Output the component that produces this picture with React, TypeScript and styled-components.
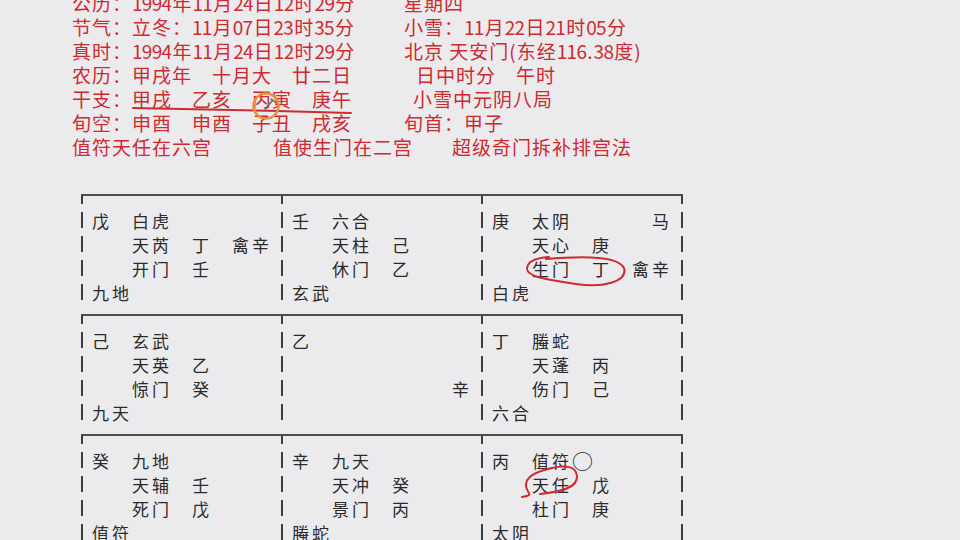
import React from "react";
import styled, { createGlobalStyle } from "styled-components";

const Global = createGlobalStyle`
  html, body { margin: 0; padding: 0; background: #ebebed; }
  body { width: 960px; height: 540px; overflow: hidden; }
`;

const RED = "#cf2a2f";

const Page = styled.div`
  position: relative;
  width: 960px;
  height: 540px;
  overflow: hidden;
  background: #ebebed;
  padding-left: 72px;
  box-sizing: border-box;
`;

const InfoBlock = styled.div`
  margin-top: -9px;
  display: flex;
  flex-direction: column;
  color: ${RED};
  font-family: "Noto Sans CJK SC", "Noto Sans", sans-serif;
  font-size: 19px;
  letter-spacing: 1px;
  white-space: pre;
`;

const InfoLine = styled.div`
  display: flex;
  height: 24px;
  line-height: 24px;
`;

const Seg = styled.span<{ $w?: number; $pad?: number }>`
  display: block;
  flex: none;
  width: ${(p) => (p.$w ? `${p.$w}px` : "auto")};
  padding-left: ${(p) => p.$pad ?? 0}px;
  box-sizing: border-box;
`;

const Num = styled.span`
  letter-spacing: -0.7px;
  margin-right: 1px;
`;

const Board = styled.div`
  margin-top: 35px;
  margin-left: 9px;
  display: grid;
  grid-template-columns: 200px 200px 202px;
  grid-auto-rows: 120px;
`;

const Cell = styled.div<{ $last?: boolean }>`
  box-sizing: border-box;
  border-top: 2px solid #4d4d4d;
  padding: 13px 0 9px 11px;
  background-image: repeating-linear-gradient(
      to bottom,
      #3a3a3a 0 16px,
      transparent 16px 24px
    )
    ${(p) =>
      p.$last
        ? `, repeating-linear-gradient(to bottom, #3a3a3a 0 16px, transparent 16px 24px)`
        : ""};
  background-size: 2px 100% ${(p) => (p.$last ? ", 2px 100%" : "")};
  background-position: 0 -8px ${(p) => (p.$last ? ", 200px -8px" : "")};
  background-repeat: no-repeat;
  color: #2a2a2a;
  font-family: "Noto Sans CJK SC", "Noto Sans", sans-serif;
  font-size: 17px;
  letter-spacing: 3px;
`;

const CellLine = styled.div`
  height: 24px;
  line-height: 24px;
  white-space: pre;
`;

const Ring = styled.span`
  font-size: 21px;
  line-height: 0;
  letter-spacing: 0;
  vertical-align: -1px;
`;

const Marks = styled.svg`
  position: absolute;
  left: 0;
  top: 0;
  pointer-events: none;
`;

const renderNum = (s: string) =>
  s.split(/(\d+)/).map((part, i) =>
    /^\d+$/.test(part) ? <Num key={i}>{part}</Num> : <React.Fragment key={i}>{part}</React.Fragment>
  );

const renderCell = (s: string) =>
  s.split(/(○)/).map((part, i) =>
    part === "○" ? <Ring key={i}>○</Ring> : <React.Fragment key={i}>{part}</React.Fragment>
  );

const cells: string[][] = [
  ["戊　白虎", "　　天芮　丁　禽辛", "　　开门　壬", "九地"],
  ["壬　六合", "　　天柱　己", "　　休门　乙", "玄武"],
  ["庚　太阴　　　　马", "　　天心　庚", "　　生门　丁　禽辛", "白虎"],
  ["己　玄武", "　　天英　乙", "　　惊门　癸", "九天"],
  ["乙", "", "　　　　　　　　辛", ""],
  ["丁　螣蛇", "　　天蓬　丙", "　　伤门　己", "六合"],
  ["癸　九地", "　　天辅　壬", "　　死门　戊", "值符"],
  ["辛　九天", "　　天冲　癸", "　　景门　丙", "螣蛇"],
  ["丙　值符○", "　　天任　戊", "　　杜门　庚", "太阴"],
];

export default function App() {
  return (
    <>
      <Global />
      <Page>
        <InfoBlock>
          <InfoLine>
            <Seg $w={332}>{renderNum("公历：1994年11月24日12时29分")}</Seg>
            <Seg>星期四</Seg>
          </InfoLine>
          <InfoLine>
            <Seg $w={332}>{renderNum("节气：立冬：11月07日23时35分")}</Seg>
            <Seg>{renderNum("小雪：11月22日21时05分")}</Seg>
          </InfoLine>
          <InfoLine>
            <Seg $w={332}>{renderNum("真时：1994年11月24日12时29分")}</Seg>
            <Seg>{renderNum("北京 天安门(东经116.38度)")}</Seg>
          </InfoLine>
          <InfoLine>
            <Seg $w={332}>农历：甲戌年　十月大　廿二日</Seg>
            <Seg $pad={12}>日中时分　午时</Seg>
          </InfoLine>
          <InfoLine>
            <Seg $w={332}>干支：甲戌　乙亥　丙寅　庚午</Seg>
            <Seg $pad={9}>小雪中元阴八局</Seg>
          </InfoLine>
          <InfoLine>
            <Seg $w={332}>旬空：申酉　申酉　子丑　戌亥</Seg>
            <Seg>旬首：甲子</Seg>
          </InfoLine>
          <InfoLine>
            <Seg $w={201}>值符天任在六宫</Seg>
            <Seg $w={179}>值使生门在二宫</Seg>
            <Seg>超级奇门拆补排宫法</Seg>
          </InfoLine>
        </InfoBlock>

        <Board>
          {cells.map((lines, i) => (
            <Cell key={i} $last={i % 3 === 2}>
              {lines.map((l, j) => (
                <CellLine key={j}>{renderCell(l)}</CellLine>
              ))}
            </Cell>
          ))}
        </Board>

        <Marks width="960" height="540" viewBox="0 0 960 540">
          <path
            d="M133 108 C 190 109, 280 111, 351 113"
            fill="none"
            stroke={RED}
            strokeWidth="2"
            strokeLinecap="round"
          />
          <circle cx="266" cy="106" r="12.5" fill="none" stroke="#e8903a" strokeWidth="2.5" />
          <path d="M273 100 L265 109" stroke="#6a6a6a" strokeWidth="1.6" strokeLinecap="round" />
          <path d="M271 99 L275 102" stroke="#6a6a6a" strokeWidth="1.4" strokeLinecap="round" />
          <path
            d="M546 259 C 580 256, 618 255, 624 268 C 628 282, 602 288, 576 284 C 552 280, 528 278, 527 269 C 527 262, 535 258, 549 257"
            fill="none"
            stroke={RED}
            strokeWidth="2"
            strokeLinecap="round"
          />
          <path
            d="M540 494 C 560 492, 578 488, 577 476 C 576 466, 565 465, 552 468 C 538 471, 525 476, 526 486 C 527 494, 535 495, 522 497"
            fill="none"
            stroke={RED}
            strokeWidth="2"
            strokeLinecap="round"
          />
        </Marks>
      </Page>
    </>
  );
}
